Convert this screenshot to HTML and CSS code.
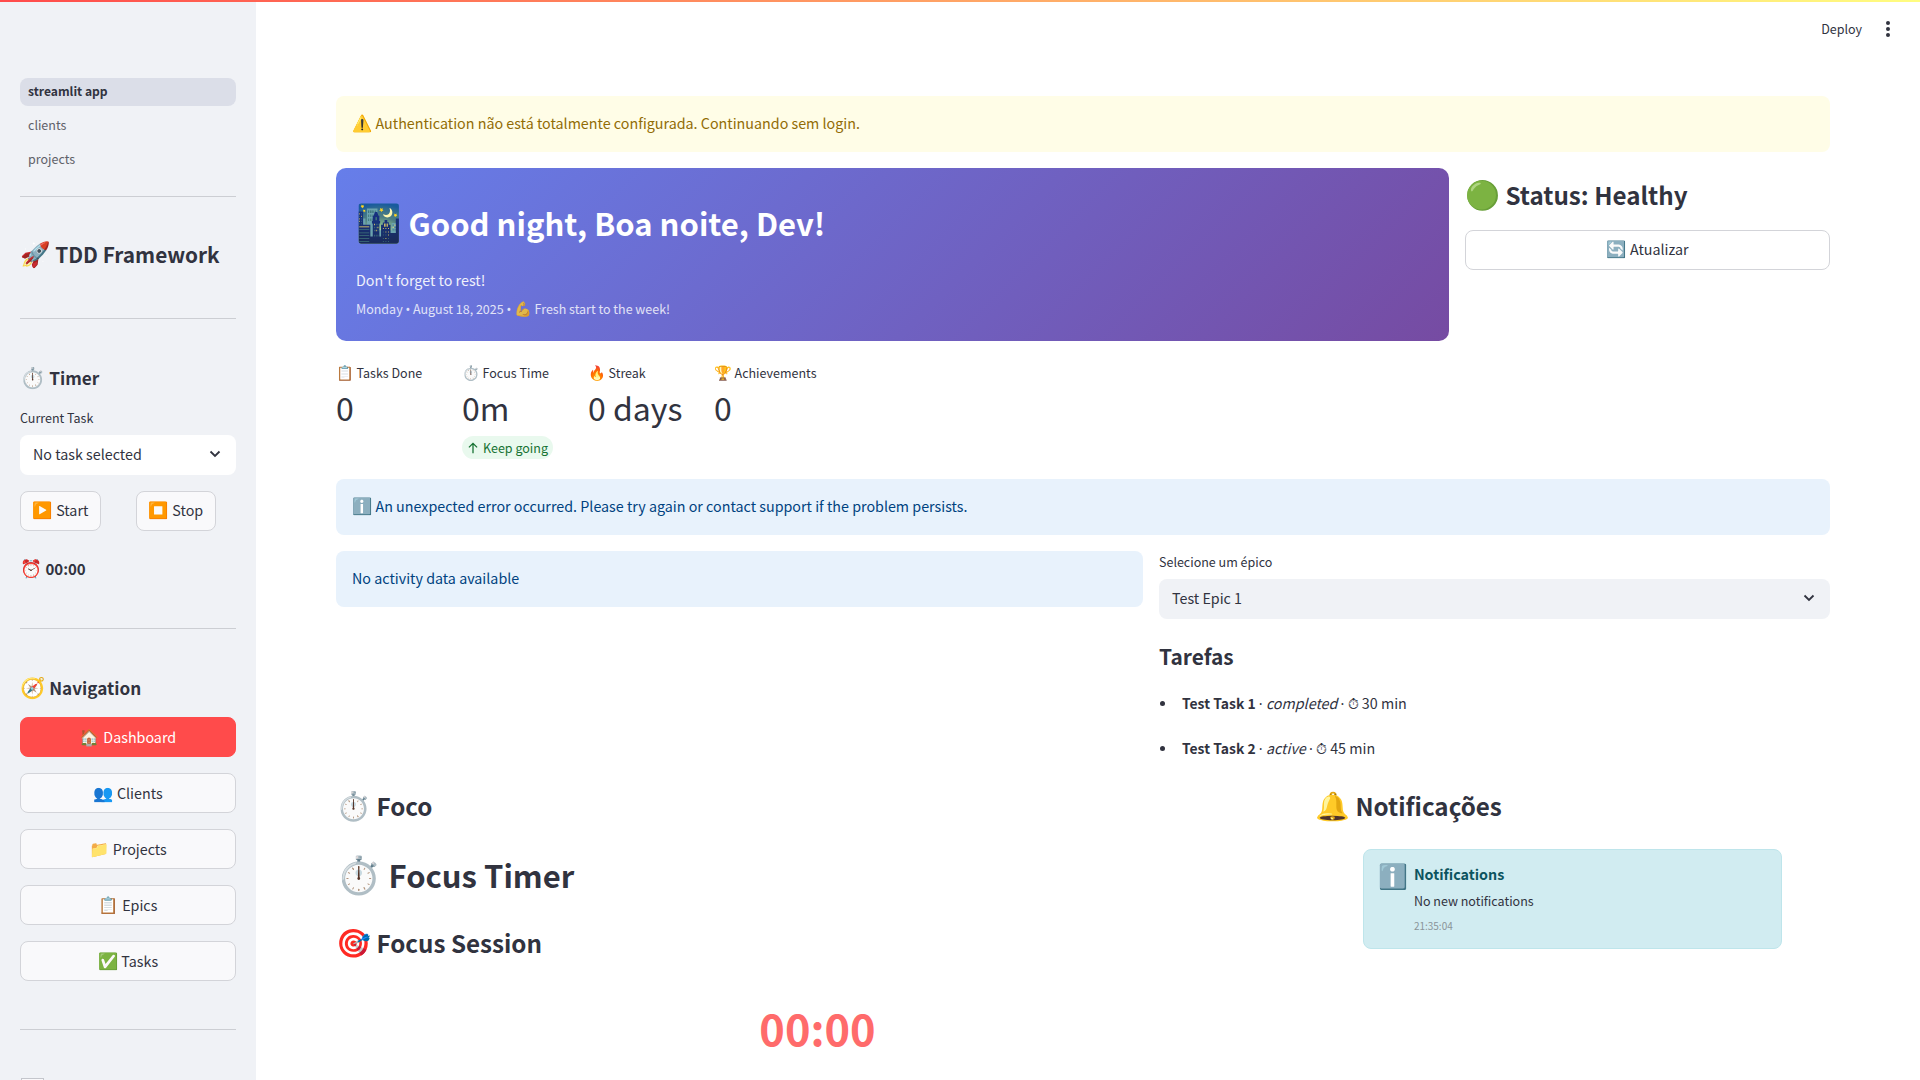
FILE: index.html
```html
<!DOCTYPE html>
<html lang="pt">
<head>
  <meta charset="UTF-8">
  <title>TDD Framework</title>
  <link rel="stylesheet" href="styles.css">
</head>
<body>
  <div class="top-line"></div>
  <div class="app">

    <!-- Sidebar -->
    <aside class="sidebar">
      <nav class="page-nav">
        <a class="page-link active">streamlit app</a>
        <a class="page-link">clients</a>
        <a class="page-link">projects</a>
      </nav>
      <hr class="rule rule-first">

      <h2 class="brand"><span class="emo">🚀</span> TDD Framework</h2>
      <hr class="rule rule-brand">

      <h3 class="side-title timer-title"><span class="emo">⏱️</span> Timer</h3>
      <div class="field-label side-label">Current Task</div>
      <div class="select select-white">
        <span>No task selected</span>
        <svg class="chevron" viewBox="0 0 16 16"><path d="M3.5 5.5 8 10l4.5-4.5"/></svg>
      </div>
      <div class="timer-buttons">
        <button class="btn btn-side"><span class="emo">▶️</span> Start</button>
        <button class="btn btn-side"><span class="emo">⏹️</span> Stop</button>
      </div>
      <div class="clock"><span class="emo">⏰</span> 00:00</div>
      <hr class="rule rule-clock">

      <h3 class="side-title nav-title"><span class="emo">🧭</span> Navigation</h3>
      <div class="nav-buttons">
        <button class="btn btn-primary"><span class="emo">🏠</span> Dashboard</button>
        <button class="btn btn-side"><span class="emo">👥</span> Clients</button>
        <button class="btn btn-side"><span class="emo">📁</span> Projects</button>
        <button class="btn btn-side"><span class="emo">📋</span> Epics</button>
        <button class="btn btn-side"><span class="emo">✅</span> Tasks</button>
      </div>
      <hr class="rule rule-nav">
      <div class="cut-box"></div>
    </aside>

    <!-- Main -->
    <main class="main">
      <header class="toolbar">
        <span class="deploy">Deploy</span>
        <svg class="kebab" viewBox="0 0 6 18"><circle cx="3" cy="3" r="2"/><circle cx="3" cy="9" r="2"/><circle cx="3" cy="15" r="2"/></svg>
      </header>

      <div class="alert alert-warning"><span class="emo">⚠️</span> Authentication não está totalmente configurada. Continuando sem login.</div>

      <section class="hero-row">
        <div class="hero">
          <h1 class="hero-title"><span class="emo">🌃</span> Good night, Boa noite, Dev!</h1>
          <p class="hero-sub">Don't forget to rest!</p>
          <p class="hero-date">Monday <span class="sep">•</span> August 18, 2025 <span class="sep">•</span> <span class="emo">💪</span> Fresh start to the week!</p>
        </div>
        <div class="status">
          <h3 class="h3 status-title"><span class="emo">🟢</span> Status: Healthy</h3>
          <button class="btn btn-white"><span class="emo">🔄</span> Atualizar</button>
        </div>
      </section>

      <section class="metrics">
        <div class="metric">
          <div class="metric-label"><span class="emo">📋</span> Tasks Done</div>
          <div class="metric-value">0</div>
        </div>
        <div class="metric">
          <div class="metric-label"><span class="emo">⏱️</span> Focus Time</div>
          <div class="metric-value">0m</div>
          <span class="delta">
            <svg class="delta-arrow" viewBox="0 0 12 12"><path d="M6 10.5V2M2.5 5.5 6 2l3.5 3.5"/></svg>
            Keep going
          </span>
        </div>
        <div class="metric">
          <div class="metric-label"><span class="emo">🔥</span> Streak</div>
          <div class="metric-value">0 days</div>
        </div>
        <div class="metric">
          <div class="metric-label"><span class="emo">🏆</span> Achievements</div>
          <div class="metric-value">0</div>
        </div>
      </section>

      <div class="alert alert-info"><span class="emo">ℹ️</span> An unexpected error occurred. Please try again or contact support if the problem persists.</div>

      <section class="activity-row">
        <div class="alert alert-info alert-empty">No activity data available</div>
        <div class="epic">
          <div class="field-label">Selecione um épico</div>
          <div class="select select-gray">
            <span>Test Epic 1</span>
            <svg class="chevron" viewBox="0 0 16 16"><path d="M3.5 5.5 8 10l4.5-4.5"/></svg>
          </div>
          <h4 class="tasks-title">Tarefas</h4>
          <ul class="task-list">
            <li><strong>Test Task 1</strong> <span class="sep">·</span> <em>completed</em> <span class="sep">·</span> <span class="watch">⏱</span> 30 min</li>
            <li><strong>Test Task 2</strong> <span class="sep">·</span> <em>active</em> <span class="sep">·</span> <span class="watch">⏱</span> 45 min</li>
          </ul>
        </div>
      </section>

      <section class="focus-row">
        <div class="focus">
          <h3 class="h3"><span class="emo">⏱️</span> Foco</h3>
          <h2 class="focus-title"><span class="emo">⏱️</span> Focus Timer</h2>
          <h3 class="h3 session-title"><span class="emo">🎯</span> Focus Session</h3>
          <div class="big-time">00:00</div>
        </div>
        <div class="notes">
          <h3 class="h3"><span class="emo">🔔</span> Notificações</h3>
          <div class="note-card">
            <span class="note-icon">ℹ️</span>
            <div class="note-body">
              <div class="note-title">Notifications</div>
              <div class="note-text">No new notifications</div>
              <div class="note-time">21:35:04</div>
            </div>
          </div>
        </div>
      </section>
    </main>
  </div>
</body>
</html>
```
FILE: styles.css
```css
html, body {
  margin: 0;
  padding: 0;
  height: 1080px;
  overflow: hidden;
  background: #fff;
  color: #31333f;
  font-family: "Noto Sans CJK SC", "Noto Color Emoji", sans-serif;
  font-size: 14.3px;
}

h1, h2, h3, h4, p, ul {
  margin: 0;
  padding: 0;
}

.emo {
  font-size: 1.14em;
}

.brand .emo,
.side-title .emo,
.clock .emo,
.hero-title .emo,
.focus-title .emo {
  font-size: 1.18em;
}

.h3 .emo {
  font-size: 1.16em;
}

.sep {
  font-family: "Noto Sans", sans-serif;
}

.watch {
  font-family: "DejaVu Sans", sans-serif;
  font-size: 14px;
}

.top-line {
  height: 2px;
  background: linear-gradient(90deg, #ff4b4b, #fffd80);
}

.app {
  display: flex;
  height: 1078px;
}

/* Sidebar */
.sidebar {
  width: 216px;
  flex: none;
  padding: 76px 20px 0;
  background: #f0f2f6;
  overflow: hidden;
}

.page-nav {
  display: flex;
  flex-direction: column;
  gap: 6px;
}

.page-link {
  height: 28px;
  line-height: 26px;
  padding-left: 8px;
  border-radius: 8px;
  font-size: 12.5px;
  color: #5f6169;
}

.page-link.active {
  background: #dbdee8;
  color: #31333f;
  font-size: 12.1px;
  font-weight: 600;
}

.rule {
  height: 1px;
  margin: 0;
  border: none;
  background: #ccced3;
}

.rule-first { margin-top: 22px; }
.rule-brand { margin-top: 45px; }
.rule-clock { margin-top: 48px; }
.rule-nav { margin-top: 48px; }

.brand {
  height: 40px;
  margin-top: 36px;
  font-size: 20.8px;
  line-height: 40px;
  font-weight: 600;
  white-space: nowrap;
}

.side-title {
  height: 28px;
  font-size: 17.2px;
  line-height: 26px;
  font-weight: 600;
}

.timer-title { margin-top: 44px; }
.nav-title { margin-top: 44px; }

.field-label {
  height: 20px;
  font-size: 12.5px;
  line-height: 20px;
}

.side-label {
  margin-top: 17px;
}

.select {
  display: flex;
  align-items: center;
  justify-content: space-between;
  box-sizing: border-box;
  height: 40px;
  padding: 0 13px 3px;
  margin-top: 7px;
  border-radius: 8px;
}

.select-white {
  background: #fff;
}

.select-gray {
  background: #f0f2f6;
}

.chevron {
  width: 16px;
  height: 16px;
  fill: none;
  stroke: #31333f;
  stroke-width: 1.8;
}

.timer-buttons {
  display: flex;
  justify-content: space-between;
  width: 196px;
  margin-top: 16px;
}

.btn {
  display: block;
  height: 40px;
  font-family: inherit;
  font-size: 14.3px;
  color: #31333f;
  border-radius: 8px;
  border: 1px solid #d3d4d9;
  text-align: center;
  padding: 0 12px 3px;
}

.btn-side {
  background: #f9f9fb;
}

.timer-buttons .btn-side {
  width: 81px;
  padding: 0 0 4px;
}

.timer-buttons .btn-side:last-child {
  width: 80px;
}

.nav-buttons {
  display: flex;
  flex-direction: column;
  gap: 16px;
  margin-top: 16px;
}

.nav-buttons .btn {
  width: 100%;
}

.btn-primary {
  background: #ff4b4b;
  border-color: #ff4b4b;
  color: #fff;
}

.btn-white {
  width: 100%;
  padding-bottom: 5px;
  background: #fff;
}

.clock {
  height: 24px;
  line-height: 22px;
  margin-top: 25px;
  font-size: 15px;
  font-weight: 600;
}

.cut-box {
  width: 21px;
  height: 20px;
  margin: 48px 0 0 1px;
  border: 1px solid #c4c6cc;
  background: #f9f9fb;
}

/* Main */
.main {
  flex: 1;
  padding: 0 90px 0 80px;
  min-width: 0;
  overflow: hidden;
}

.toolbar {
  display: flex;
  align-items: center;
  justify-content: flex-end;
  height: 53px;
  margin: 0 -90px 41px 0;
  padding-right: 29px;
  gap: 23px;
}

.deploy {
  font-size: 12.5px;
}

.kebab {
  width: 6px;
  height: 18px;
  fill: #31333f;
}

.alert {
  height: 56px;
  box-sizing: border-box;
  padding: 0 16px;
  line-height: 52px;
  border-radius: 8px;
  white-space: nowrap;
}

.alert-warning {
  background: #fffde7;
  color: #926c05;
}

.alert-info {
  background: #e8f2fc;
  color: #004280;
}

.alert-empty {
  line-height: 54px;
}

.hero-row {
  display: grid;
  grid-template-columns: 1113px 365px;
  gap: 16px;
  margin-top: 16px;
}

.hero {
  height: 173px;
  box-sizing: border-box;
  padding: 26px 20px 0;
  border-radius: 10px;
  background: linear-gradient(135deg, #667eea, #764ba2);
  color: #fff;
}

.hero-title {
  font-size: 31px;
  line-height: 54px;
  font-weight: 600;
}

.hero-sub {
  margin-top: 18px;
  line-height: 24px;
  opacity: 0.9;
}

.hero-date {
  margin-top: 6px;
  font-size: 12.5px;
  line-height: 20px;
  opacity: 0.8;
}

.h3 {
  font-size: 24.2px;
  line-height: 40px;
  font-weight: 600;
}

.status-title {
  margin: 5px 0 15px;
}

.metrics {
  display: grid;
  grid-template-columns: repeat(4, 110px);
  gap: 16px;
  height: 122px;
  margin-top: 16px;
}

.metric-label {
  margin-top: 5px;
  font-size: 12.5px;
  line-height: 20px;
  white-space: nowrap;
}

.metric-value {
  margin-top: -3px;
  font-size: 32px;
  line-height: 54px;
  white-space: nowrap;
}

.delta {
  display: inline-flex;
  align-items: center;
  gap: 3px;
  height: 23px;
  margin-top: 2px;
  padding: 0 5px 0 4px;
  border-radius: 12px;
  background: #e9f9ee;
  color: #177233;
  font-size: 12.5px;
}

.delta-arrow {
  width: 14px;
  height: 14px;
  fill: none;
  stroke: #177233;
  stroke-width: 1.1;
}

.activity-row {
  display: grid;
  grid-template-columns: 807px 671px;
  gap: 16px;
  margin-top: 16px;
  height: 233px;
}

.epic {
  padding-top: 1px;
}

.epic .select {
  margin-top: 7px;
}

.tasks-title {
  margin-top: 17px;
  font-size: 20.9px;
  line-height: 40px;
  font-weight: 600;
}

.task-list {
  margin-top: 15px;
  padding-left: 23px;
  list-style: none;
}

.task-list li {
  position: relative;
  line-height: 24px;
  margin-bottom: 20px;
}

.task-list li::before {
  content: "";
  position: absolute;
  left: -22px;
  top: 10px;
  width: 5px;
  height: 5px;
  border-radius: 50%;
  background: #31333f;
}

.task-list strong {
  font-size: 13.9px;
  font-weight: 600;
}

.focus-row {
  display: grid;
  grid-template-columns: 963px 515px;
  gap: 16px;
}

.focus-title {
  margin-top: 20px;
  font-size: 31px;
  line-height: 54px;
  font-weight: 600;
}

.session-title {
  margin-top: 19px;
}

.big-time {
  margin-top: 28px;
  font-size: 43.3px;
  line-height: 72px;
  font-weight: 700;
  color: #ff6b6b;
  text-align: center;
}

.note-card {
  display: flex;
  box-sizing: border-box;
  height: 100px;
  margin: 23px 48px 0;
  padding: 13px 0 0 14px;
  gap: 6px;
  border: 1px solid #bee5eb;
  border-radius: 8px;
  background: #d1ecf1;
}

.note-icon {
  font-size: 24px;
  line-height: 24px;
}

.note-title {
  font-size: 14.3px;
  font-weight: 600;
  color: #0c5460;
  line-height: 22px;
}

.note-text {
  margin-top: 6px;
  font-size: 12.5px;
  line-height: 20px;
}

.note-time {
  margin-top: 7px;
  font-size: 10px;
  line-height: 16px;
  color: #8a9499;
}
```
